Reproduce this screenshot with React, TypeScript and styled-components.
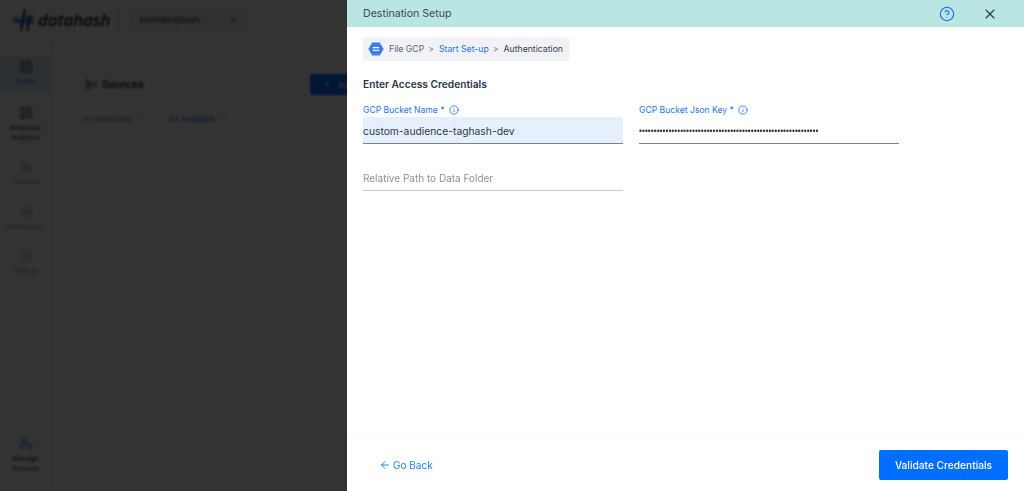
import React from "react";
import styled, { createGlobalStyle } from "styled-components";
import { ArrowLeft, ChevronDown, CircleHelp, Info, Plus, Settings, X, LayoutDashboard } from "lucide-react";

const Global = createGlobalStyle`
  html, body { margin: 0; padding: 0; height: 100%; overflow: hidden; background: #fff; }
  body { font-family: Inter, "Noto Sans", sans-serif; }
  * { box-sizing: border-box; }
`;

const Page = styled.div`
  position: relative;
  width: 1024px;
  height: 491px;
  overflow: hidden;
  display: flex;
  flex-direction: column;
  background: #fdfdfd;
`;
const TopBar = styled.header`
  height: 40px;
  flex: none;
  display: flex;
  align-items: center;
  padding-left: 11px;
  background: #fff;
  border-bottom: 1px solid #eee;
`;
const Logo = styled.div`
  display: flex;
  align-items: center;
  width: 107px;
  height: 32px;
  font: italic 600 17px/1 "Open Sans", sans-serif;
  letter-spacing: -0.2px;
  color: #1b2435;
`;
const Divider = styled.span`
  width: 1px;
  height: 24px;
  background: #e2e2e2;
  margin: 0 11px 0 0;
`;
const WorkspaceSelect = styled.div`
  width: 118px;
  height: 24px;
  margin-left: 0;
  display: flex;
  align-items: center;
  justify-content: space-between;
  padding: 0 8px 0 10px;
  background: #f3f3f3;
  font-size: 9.5px;
  color: #333;
  svg { color: #0b6ee8; }
`;
const Body = styled.div`
  flex: 1;
  display: flex;
  min-height: 0;
`;
const Sidebar = styled.nav`
  width: 52px;
  flex: none;
  display: flex;
  flex-direction: column;
  align-items: center;
  padding-top: 16px;
  background: #fff;
  border-right: 1px solid #eee;
`;
const NavItem = styled.div<{ $active?: boolean; $muted?: boolean }>`
  width: 100%;
  height: ${(p) => (p.$active ? "36px" : "auto")};
  margin-bottom: ${(p) => (p.$active ? "14px" : "17px")};
  display: flex;
  flex-direction: column;
  align-items: center;
  justify-content: center;
  gap: 4px;
  text-align: center;
  font-size: 6.7px;
  line-height: 9.5px;
  color: ${(p) => (p.$active ? "#0b6ee8" : p.$muted ? "#9a9a9a" : "#333")};
  background: ${(p) => (p.$active ? "#dceeff" : "transparent")};
  svg { color: ${(p) => (p.$muted ? "#8a8a8a" : "#222")}; }
`;
const NavSpacer = styled.div`
  flex: 1;
`;
const Content = styled.main`
  flex: 1;
  padding: 16px 0 0 18px;
`;
const SourcesCard = styled.section`
  width: 420px;
  height: 81px;
  padding: 17px 12px;
  border: 1px solid #eee;
  border-radius: 5px;
  background: #fff;
`;
const CardHead = styled.div`
  display: flex;
  align-items: center;
  gap: 4px;
  font-size: 10.5px;
  font-weight: 600;
  color: #222;
`;
const AddButton = styled.div`
  margin-left: 162px;
  width: 80px;
  height: 21px;
  display: flex;
  align-items: center;
  gap: 6px;
  padding-left: 13px;
  border-radius: 2px;
  background: #006eff;
  color: #fff;
  font-size: 8px;
`;
const Counts = styled.div`
  display: flex;
  gap: 25px;
  margin-top: 19px;
`;
const Count = styled.span<{ $blue?: boolean }>`
  display: inline-flex;
  align-items: center;
  gap: 4px;
  font-size: 8px;
  color: ${(p) => (p.$blue ? "#0b6ee8" : "#888")};
`;
const Backdrop = styled.div`
  position: absolute;
  inset: 0;
  background: rgba(0, 0, 0, 0.8);
  backdrop-filter: blur(0.8px);
`;
const Drawer = styled.aside`
  position: absolute;
  top: 0;
  right: 0;
  bottom: 0;
  width: 677px;
  display: flex;
  flex-direction: column;
  background: #fff;
`;
const DrawerHeader = styled.header`
  height: 27px;
  flex: none;
  display: flex;
  align-items: center;
  padding: 0 26px 0 16px;
  background: #b9e6e2;
  font-size: 10.6px;
  color: #3e4657;
`;
const HeaderTitle = styled.span`
  flex: 1;
`;
const HelpIcon = styled(CircleHelp)`
  color: #0b6ee8;
  margin-right: 27px;
`;
const CloseIcon = styled(X)`
  color: #2b3447;
`;
const DrawerBody = styled.div`
  flex: 1;
  padding: 10px 16px 0;
  min-height: 0;
`;
const Crumbs = styled.div`
  display: inline-flex;
  align-items: center;
  height: 24px;
  padding: 0 6px 0 5px;
  border-radius: 2px;
  background: #f1f2f5;
  font-size: 8.7px;
  color: #5c6270;
`;
const CrumbLogo = styled.svg`
  margin-right: 5px;
`;
const Crumb = styled.span<{ $tone?: "blue" | "dark" }>`
  color: ${(p) => (p.$tone === "blue" ? "#1f73ea" : p.$tone === "dark" ? "#333c4e" : "#5c6270")};
`;
const CrumbSep = styled.span`
  margin: 0 5px 0 4px;
  color: #6b7280;
`;
const SectionTitle = styled.h2`
  margin: 16px 0 0;
  font-size: 10.2px;
  line-height: 14px;
  font-weight: 600;
  color: #2b3447;
`;
const FieldGrid = styled.div`
  display: grid;
  grid-template-columns: 260px 260px;
  column-gap: 16px;
  row-gap: 20px;
  margin-top: 12px;
  align-items: start;
`;
const Field = styled.div``;
const FieldLabel = styled.label`
  display: flex;
  align-items: center;
  gap: 4px;
  height: 14px;
  font-size: 8.6px;
  color: #1f73ea;
`;
const FieldValue = styled.div<{ $filled?: boolean; $placeholder?: boolean }>`
  height: 27px;
  display: flex;
  align-items: center;
  padding-top: 2px;
  font-size: ${(p) => (p.$placeholder ? "10px" : "10.3px")};
  color: ${(p) => (p.$placeholder ? "#8b8f98" : "#2f3746")};
  background: ${(p) => (p.$filled ? "#e6f0fd" : "transparent")};
  border-bottom: 1px solid ${(p) => (p.$placeholder ? "#c9c9c9" : "#7d828c")};
`;
const Mask = styled.span`
  font-family: "Liberation Sans", sans-serif;
  font-size: 8.35px;
  letter-spacing: 0.02px;
  color: #2b3447;
`;
const PlaceholderField = styled.div`
  grid-column: 1;
  margin-top: 0;
`;
const DrawerFooter = styled.footer`
  height: 52px;
  flex: none;
  display: flex;
  align-items: center;
  justify-content: space-between;
  padding: 0 16px 0 32px;
  box-shadow: 0 -3px 5px rgba(0, 40, 30, 0.025);
`;
const BackLink = styled.a`
  display: flex;
  align-items: center;
  gap: 2px;
  font-size: 10px;
  color: #1f83f5;
`;
const PrimaryButton = styled.button`
  width: 129px;
  height: 30px;
  border: 0;
  border-radius: 2px;
  background: #006eff;
  color: #fff;
  font: 500 10.2px Inter, sans-serif;
`;

const GridIcon = () => <LayoutDashboard size={14} strokeWidth={1.5} />;

const InputsIcon = ({ size = 14 }: { size?: number }) => (
  <svg width={size} height={size} viewBox="0 0 16 16" fill="none" stroke="currentColor" strokeWidth="1">
    <circle cx="11.5" cy="8" r="2.6" />
    <path d="M1 8h7M6 6l2 2-2 2M3 2l4 3M5 2.8 7 5 4.2 5M3 14l4-3M4.2 11H7l-2 2.2" />
  </svg>
);
const OutputsIcon = () => (
  <svg width="14" height="14" viewBox="0 0 16 16" fill="none" stroke="currentColor" strokeWidth="1">
    <circle cx="4.5" cy="8" r="2.6" />
    <path d="M7 8h8M13 6l2 2-2 2M9 5l4-3M10.5 2H13v2.5M9 11l4 3M13 11.5V14h-2.5" />
  </svg>
);
const ManageIcon = () => (
  <svg width="15" height="15" viewBox="0 0 16 16" fill="none" stroke="#0b6ee8" strokeWidth="1">
    <circle cx="6" cy="4.5" r="2.5" />
    <path d="M1.5 13v-1.5c0-2 2-3 4.5-3 .8 0 1.3.1 1.8.3M1.5 13h5" />
    <circle cx="12" cy="10.5" r="2.6" strokeDasharray="1.6 .6" strokeWidth="1.4" />
  </svg>
);
const HashLogo = () => (
  <svg width="26" height="26" viewBox="0 0 26 26" fill="none" style={{ marginRight: 1 }}>
    <rect x="1" y="9" width="10" height="8" fill="#b9c8d8" />
    <rect x="14" y="9" width="9" height="8" fill="#5fb0f0" />
    <path d="M14 2 10 24" stroke="#1b2435" strokeWidth="2" />
    <path d="M19 8 16 24" stroke="#1b2435" strokeWidth="2" />
    <path d="M3 14h18" stroke="#0b6ee8" strokeWidth="2" />
  </svg>
);

export default function App() {
  return (
    <Page>
      <Global />
      <TopBar>
        <Logo>
          <HashLogo />
          datahash
        </Logo>
        <Divider />
        <WorkspaceSelect>
          Homesspuun <ChevronDown size={13} />
        </WorkspaceSelect>
      </TopBar>
      <Body>
        <Sidebar>
          <NavItem $active>
            <GridIcon />
            Studio
          </NavItem>
          <NavItem>
            <GridIcon />
            <span>
              Whatsapp
              <br />
              Analytics
            </span>
          </NavItem>
          <NavItem $muted>
            <InputsIcon />
            Sources
          </NavItem>
          <NavItem $muted>
            <OutputsIcon />
            Destinations
          </NavItem>
          <NavItem $muted>
            <Settings size={14} strokeWidth={1.2} />
            Settings
          </NavItem>
          <NavSpacer />
          <NavItem>
            <ManageIcon />
            <span>
              Manage
              <br />
              Account
            </span>
          </NavItem>
        </Sidebar>
        <Content>
          <SourcesCard>
            <CardHead>
              <InputsIcon size={15} />
              Sources
              <AddButton>
                <Plus size={9} />
                Add
              </AddButton>
            </CardHead>
            <Counts>
              <Count>
                5 Connected <ChevronDown size={8} />
              </Count>
              <Count $blue>
                34 Available <ChevronDown size={8} />
              </Count>
            </Counts>
          </SourcesCard>
        </Content>
      </Body>
      <Backdrop />
      <Drawer>
        <DrawerHeader>
          <HeaderTitle>Destination Setup</HeaderTitle>
          <HelpIcon size={16} strokeWidth={1.6} />
          <CloseIcon size={16} strokeWidth={1.7} />
        </DrawerHeader>
        <DrawerBody>
          <Crumbs>
            <CrumbLogo width="16" height="16" viewBox="0 0 16 16">
              <path d="M4.2 1.4h7.6L15.6 8l-3.8 6.6H4.2L.4 8z" fill="#3f7ee8" />
              <path d="M5 6h6v1.3H5zM5 8.7h6V10H5z" fill="#fff" />
            </CrumbLogo>
            <Crumb>File GCP</Crumb>
            <CrumbSep>&gt;</CrumbSep>
            <Crumb $tone="blue">Start Set-up</Crumb>
            <CrumbSep>&gt;</CrumbSep>
            <Crumb $tone="dark">Authentication</Crumb>
          </Crumbs>
          <SectionTitle>Enter Access Credentials</SectionTitle>
          <FieldGrid>
            <Field>
              <FieldLabel>
                GCP Bucket Name * <Info size={10} />
              </FieldLabel>
              <FieldValue $filled>custom-audience-taghash-dev</FieldValue>
            </Field>
            <Field>
              <FieldLabel>
                GCP Bucket Json Key * <Info size={10} />
              </FieldLabel>
              <FieldValue>
                <Mask>{"•".repeat(61)}</Mask>
              </FieldValue>
            </Field>
            <PlaceholderField>
              <FieldValue $placeholder>Relative Path to Data Folder</FieldValue>
            </PlaceholderField>
          </FieldGrid>
        </DrawerBody>
        <DrawerFooter>
          <BackLink>
            <ArrowLeft size={12} />
            Go Back
          </BackLink>
          <PrimaryButton>Validate Credentials</PrimaryButton>
        </DrawerFooter>
      </Drawer>
    </Page>
  );
}
